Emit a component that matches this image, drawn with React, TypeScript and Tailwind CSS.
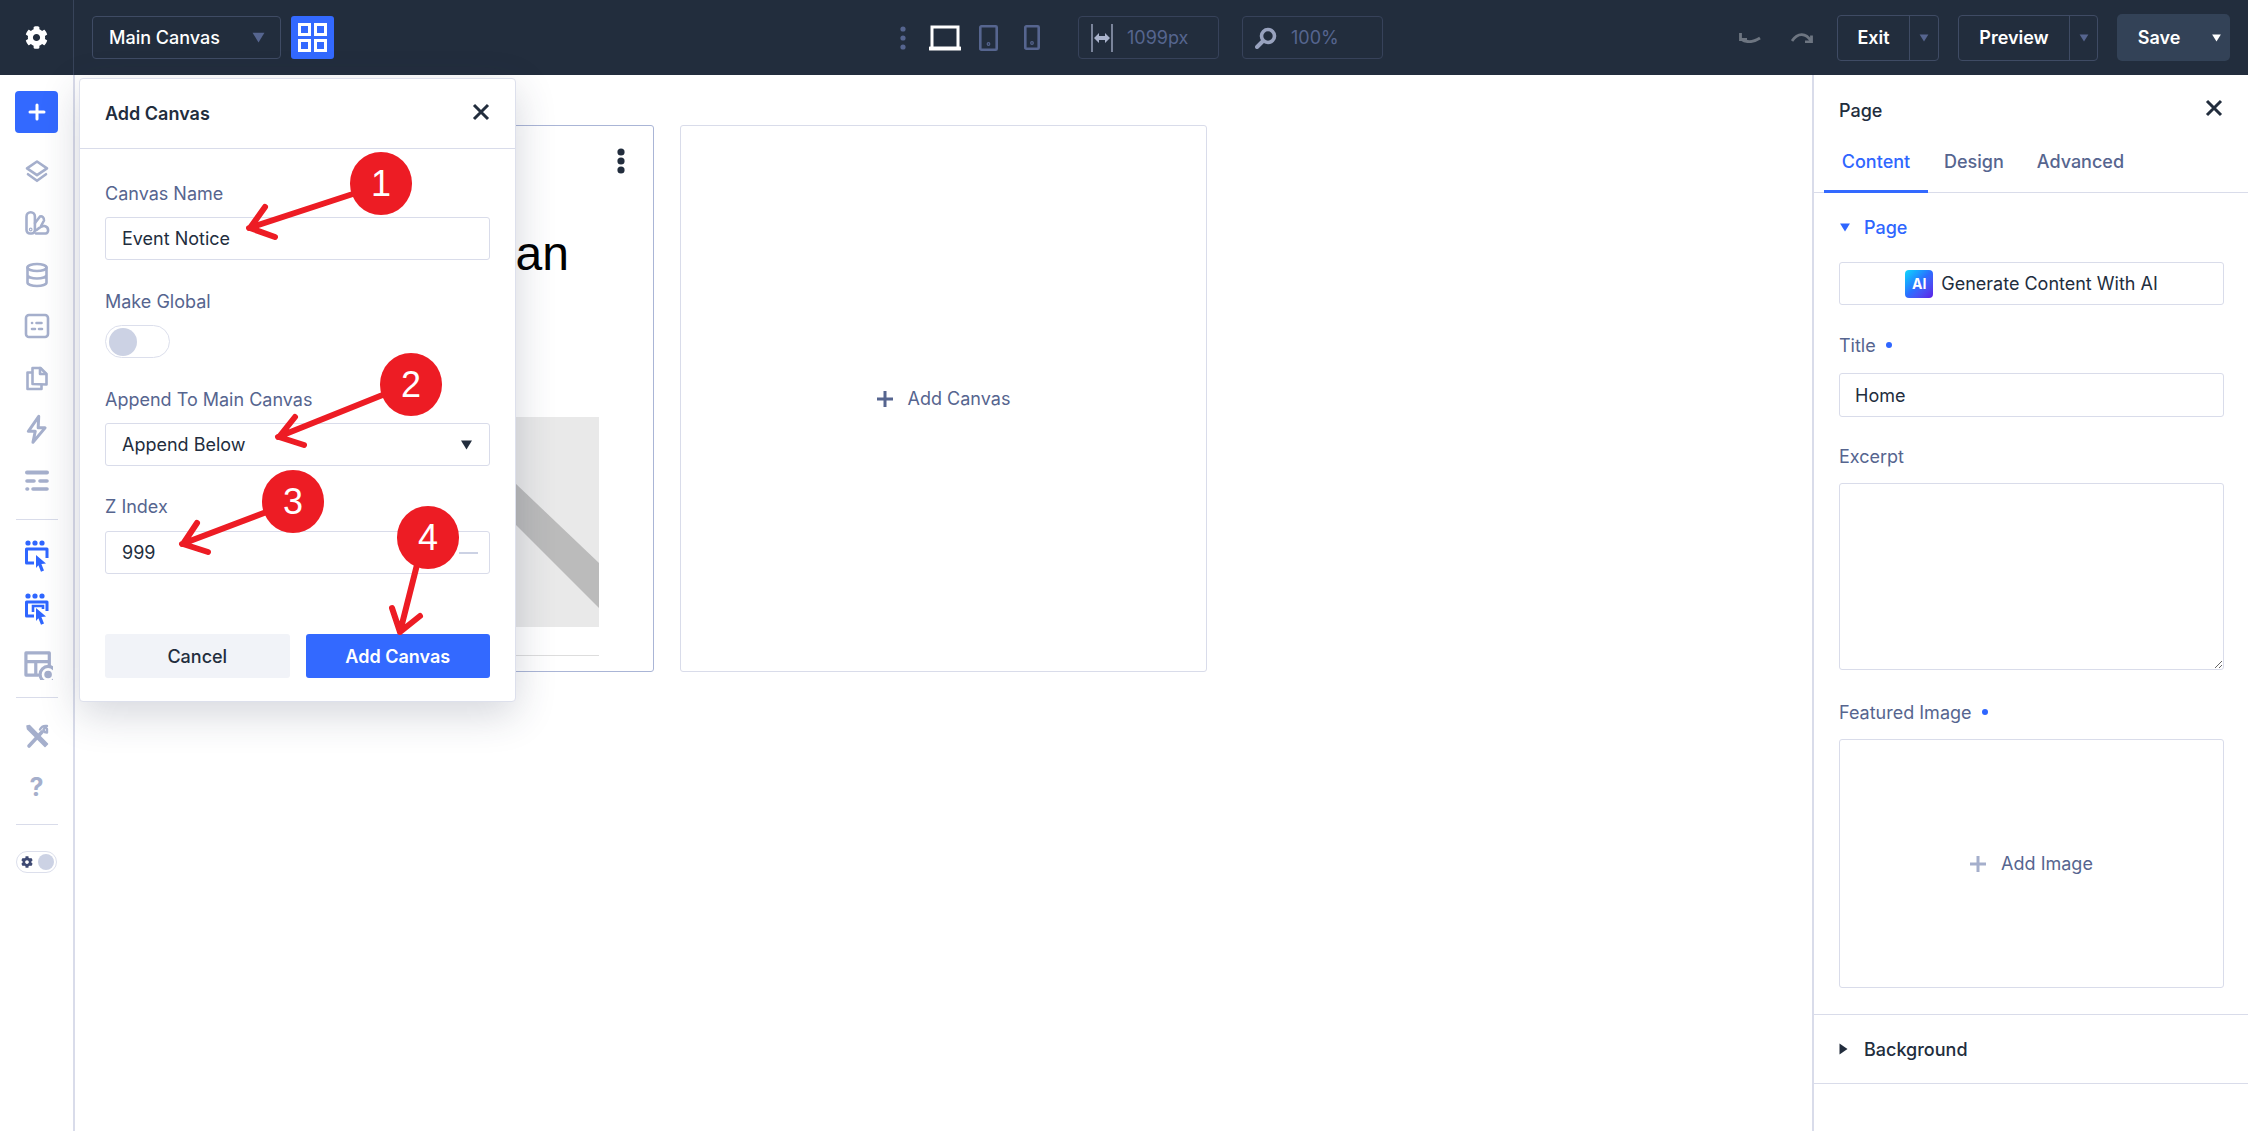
import { FaCog } from "react-icons/fa";
import type { ReactNode } from "react";

const sideStroke = "#a5afcc";

function Caret({ className }: { className: string }) {
  return (
    <svg viewBox="0 0 12 10" className={className} fill="currentColor">
      <path d="M0.5 0.5h11L6 9.5z" />
    </svg>
  );
}

function SideIcon({ children, size = 26, className = "h-[51.5px]" }: { children: ReactNode; size?: number; className?: string }) {
  return (
    <div className={`flex items-center justify-center w-full ${className}`}>
      <svg width={size} height={size} viewBox="0 0 26 26" fill="none" stroke={sideStroke} strokeWidth="2.6" strokeLinecap="round" strokeLinejoin="round">
        {children}
      </svg>
    </div>
  );
}

function SelectorIcon({ nested }: { nested?: boolean }) {
  return (
    <svg width="28" height="34" viewBox="0 0 28 34" fill="none">
      <g fill="#2f66ff">
        <circle cx="5" cy="3" r="2.6" />
        <circle cx="12" cy="3" r="2.6" />
        <circle cx="19" cy="3" r="2.6" />
      </g>
      <path d="M11 23H3.5V9h20.5v9" stroke="#2f66ff" strokeWidth="3" strokeLinejoin="round" />
      {nested && <path d="M10 19v-6h10v3" stroke="#2f66ff" strokeWidth="2.6" />}
      <path d="M13 15l10 8.5-4.6.6 2.6 6.4-3 1.2-2.6-6.4L13 28z" fill="#2f66ff" />
    </svg>
  );
}

function Sidebar() {
  return (
    <aside className="w-[75px] shrink-0 border-r-2 border-[#d9dcea] flex flex-col items-center pt-[16px] bg-white">
      <div className="w-[43px] h-[42px] rounded-[4px] bg-[#3369ff] flex items-center justify-center mb-[13px]">
        <svg width="18" height="18" viewBox="0 0 18 18" stroke="#fff" strokeWidth="3" strokeLinecap="round">
          <path d="M9 2v14M2 9h14" />
        </svg>
      </div>
      <SideIcon>
        <path d="M13 2.5l10 6.8-10 6.8-10-6.8z" />
        <path d="M4 15.2l9 6.6 9-6.6" />
      </SideIcon>
      <SideIcon>
        <path d="M2.5 6.5a4.2 4.2 0 0 1 8.4 0v14a3.5 3.5 0 0 1-3.5 3h-1.5a3.4 3.4 0 0 1-3.4-3.4z" />
        <path d="M11 13l5-6.5c2-1 4.4 1.5 4 4l-3 5.5M12 23.5h9.5c3.3 0 4-6.5-1-7.5-3-.6-5 1.5-8 4" />
        <circle cx="6.7" cy="19.5" r=".6" />
      </SideIcon>
      <SideIcon>
        <ellipse cx="13" cy="5.5" rx="9.5" ry="3.5" />
        <path d="M3.5 5.5v15c0 2 4.2 3.5 9.5 3.5s9.5-1.5 9.5-3.5v-15M3.5 13c0 2 4.2 3.5 9.5 3.5s9.5-1.500 9.500-3.500" />
      </SideIcon>
      <SideIcon>
        <rect x="2" y="2" width="22" height="22" rx="3" />
        <path d="M8 10h.1M12.500 10h5M8 16h3M15 16h3" />
      </SideIcon>
      <SideIcon>
        <path d="M8.500 19V3h8l6 6v10.500z" />
        <path d="M16 3v6h6M8 7.500H3.500V24h14v-4" />
      </SideIcon>
      <SideIcon size={30}>
        <path d="M14.500 2L5.500 15h6l-2 9.500 10.500-12.500h-6z" />
      </SideIcon>
      <SideIcon>
        <path d="M3 4.500h20" strokeWidth="4" />
        <path d="M3 13h7M16 13h7" strokeWidth="3.600" />
        <path d="M3 21h.6M9 21h14" strokeWidth="3.600" />
      </SideIcon>
      <div className="w-[42px] h-px bg-[#d9dcea] mt-[12.5px] mb-[11px]" />
      <div className="h-[52px] flex items-center justify-center">
        <SelectorIcon />
      </div>
      <div className="h-[53px] flex items-center justify-center">
        <SelectorIcon nested />
      </div>
      <SideIcon size={32} className="h-[55px]">
        <path d="M14 22H4V4h19v11M4 11h19M12 11v11" />
        <circle cx="22" cy="21.500" r="6.500" />
        <circle cx="22" cy="21.500" r="1.800" fill={sideStroke} />
      </SideIcon>
      <div className="w-[42px] h-px bg-[#d9dcea] mt-[6px] mb-[12px]" />
      <SideIcon className="h-[52px]">
        <path d="M5 23L18 9" strokeWidth="3.600" />
        <path d="M16 6.500c1.500-3 4-4 7-3.500l-3.500 3.500 1 2.500 2.500.500L23 6" strokeWidth="2.400" />
        <path d="M3 3l2.500-.5 18 18.500-2.500 2.500L3.500 6z" fill={sideStroke} strokeWidth="1.500" />
      </SideIcon>
      <div className="h-[52px] flex items-center justify-center text-[25px] font-bold text-[#a5afcc]">?</div>
      <div className="w-[42px] h-px bg-[#d9dcea] mt-[10px] mb-[26px]" />
      <div className="w-[41px] h-[22px] rounded-full border border-[#dcdfec] flex items-center justify-between pl-[4px] pr-[2px]">
        <FaCog className="text-[#3e4a73] text-[12px]" />
        <div className="w-[16px] h-[16px] rounded-full bg-[#ccd2e4]" />
      </div>
    </aside>
  );
}

function TopBar() {
  return (
    <header className="h-[75px] shrink-0 bg-[#222d3d] flex items-center">
      <div className="w-[74px] h-full border-r border-[#38445a] flex items-center justify-center">
        <FaCog className="text-white text-[23px]" />
      </div>
      <div className="ml-[18px] w-[189px] h-[43px] rounded-[4px] border border-[#3f4b64] flex items-center justify-between pl-[16px] pr-[15px] text-white text-[18px] font-medium">
        Main Canvas
        <Caret className="w-[13px] h-[11px] text-[#56658f]" />
      </div>
      <div className="ml-[10px] w-[43px] h-[43px] rounded-[3px] bg-[#3369ff] flex items-center justify-center">
        <svg width="29" height="29" viewBox="0 0 29 29" fill="none" stroke="#fff" strokeWidth="3">
          <rect x="1.500" y="1.500" width="10" height="10" />
          <rect x="17.500" y="1.500" width="10" height="10" />
          <rect x="1.500" y="17.500" width="10" height="10" />
          <rect x="17.500" y="17.500" width="10" height="10" />
        </svg>
      </div>

      <svg width="6" height="24" viewBox="0 0 6 24" fill="#56658f" className="ml-[566px]">
        <circle cx="3" cy="3" r="2.600" />
        <circle cx="3" cy="12" r="2.600" />
        <circle cx="3" cy="21" r="2.600" />
      </svg>
      <svg width="32" height="26" viewBox="0 0 32 26" fill="none" stroke="#fff" className="ml-[23px]">
        <path d="M3 23V2h26v21" strokeWidth="3" />
        <path d="M1 23.500h30" strokeWidth="4" strokeLinecap="round" />
      </svg>
      <svg width="19" height="26" viewBox="0 0 19 26" fill="none" stroke="#56658f" strokeWidth="2.600" className="ml-[18px]">
        <rect x="1.300" y="1.300" width="16.400" height="23.400" rx="1" />
        <circle cx="9.500" cy="19" r=".6" />
      </svg>
      <svg width="16" height="25" viewBox="0 0 16 25" fill="none" stroke="#56658f" strokeWidth="2.600" className="ml-[26px]">
        <rect x="1.300" y="1.300" width="13.400" height="22.400" rx="1" />
        <circle cx="8" cy="18" r=".6" />
      </svg>

      <div className="ml-[38px] w-[141px] h-[43px] rounded-[4px] border border-[#37425a] flex items-center pl-[12px] text-[#56658f] text-[18px]">
        <svg width="22" height="30" viewBox="0 0 22 30" fill="none">
          <path d="M1 1v28M21 1v28" stroke="#aab3cc" strokeWidth="1.300" />
          <path d="M3 15l5-5v3h6v-3l5 5-5 5v-3H8v3z" fill="#aab3cc" />
        </svg>
        <span className="ml-[14px]">1099px</span>
      </div>
      <div className="ml-[23px] w-[141px] h-[43px] rounded-[4px] border border-[#37425a] flex items-center pl-[12px] text-[#56658f] text-[18px]">
        <svg width="22" height="22" viewBox="0 0 22 22" fill="none" stroke="#98a2be">
          <circle cx="13" cy="9" r="6.500" strokeWidth="3.600" />
          <path d="M7.500 14.500L2 20" strokeWidth="4" strokeLinecap="round" />
        </svg>
        <span className="ml-[14px]">100%</span>
      </div>

      <div className="ml-auto mr-[18px] flex items-center">
        <svg width="22" height="11" viewBox="0 0 22 11" fill="none" stroke="#6d7581" strokeWidth="2.800">
          <path d="M1.500 1v6.500H8" />
          <path d="M2 7c5 3.500 12 3.500 19-1" />
        </svg>
        <svg width="22" height="11" viewBox="0 0 22 11" fill="none" stroke="#6d7581" strokeWidth="2.800" className="ml-[30px]">
          <path d="M20.500 3.500V10H14" />
          <path d="M20 9C15 1 7 0 1 9" />
        </svg>
        <div className="ml-[24px] w-[102px] h-[46px] rounded-[4px] border border-[#3f4b64] flex items-center">
          <div className="w-[71px] text-center text-white text-[18px] font-semibold">Exit</div>
          <div className="flex-1 h-full border-l border-[#3f4b64] flex items-center justify-center">
            <Caret className="w-[10px] h-[8px] text-[#56658f]" />
          </div>
        </div>
        <div className="ml-[19px] w-[140px] h-[46px] rounded-[4px] border border-[#3f4b64] flex items-center">
          <div className="w-[110px] text-center text-white text-[18px] font-semibold">Preview</div>
          <div className="flex-1 h-full border-l border-[#3f4b64] flex items-center justify-center">
            <Caret className="w-[10px] h-[8px] text-[#56658f]" />
          </div>
        </div>
        <div className="ml-[19px] w-[113px] h-[47px] rounded-[5px] bg-[#334257] flex items-center">
          <div className="w-[84px] text-center text-white text-[18px] font-semibold">Save</div>
          <Caret className="ml-[10px] w-[11px] h-[8px] text-white" />
        </div>
      </div>
    </header>
  );
}

function CanvasArea() {
  return (
    <main className="flex-1 min-w-0 pt-[50px] pl-[52px] flex gap-[26px] items-start bg-white">
      <div className="w-[527px] h-[547px] rounded-[3px] border border-[#aab5d6] px-[18px] relative flex flex-col items-end">
        <svg width="8" height="26" viewBox="0 0 8 26" fill="#222d3d" className="absolute top-[22px] right-[28px]">
          <circle cx="4" cy="4" r="3.600" />
          <circle cx="4" cy="13" r="3.600" />
          <circle cx="4" cy="22" r="3.600" />
        </svg>
        <div className="mt-[98px] mr-[66px] text-[48px] leading-[60px] text-black font-['Liberation_Sans',sans-serif]">an</div>
        <div className="mt-[133px] mr-[36px] w-[470px] h-[210px] bg-[#e9e9e9] overflow-hidden">
          <svg width="470" height="210" viewBox="0 0 470 210">
            <path d="M0 -120L470 214V150L120 -120z" fill="none" />
            <path d="M300 -6L470 146V191L300 26L280 60L300 -6z" fill="none" />
            <path d="M386 66L470 146V191L386 107z" fill="#bbbbbb" />
          </svg>
        </div>
        <div className="mt-[28px] mr-[36px] w-[470px] h-px bg-[#dddddd]" />
      </div>
      <div className="w-[527px] h-[547px] rounded-[3px] border border-[#d9dcea] flex items-center justify-center gap-[15px] text-[#56658f] text-[18px]">
        <svg width="16" height="16" viewBox="0 0 16 16" stroke="#56658f" strokeWidth="3">
          <path d="M8 0v16M0 8h16" />
        </svg>
        Add Canvas
      </div>
    </main>
  );
}

function FieldLabel({ text, dot }: { text: string; dot?: boolean }) {
  return (
    <div className="h-[24px] flex items-center text-[18px] text-[#56658f]">
      {text}
      {dot && <span className="ml-[10px] w-[6px] h-[6px] rounded-full bg-[#2f66ff]" />}
    </div>
  );
}

function RightPanel() {
  return (
    <aside className="w-[436px] shrink-0 border-l-2 border-[#d9dcea] bg-white flex flex-col">
      <div className="h-[65px] pl-[25px] pr-[24px] pt-[5px] flex items-center justify-between">
        <span className="text-[18px] font-medium text-[#222d3d]">Page</span>
        <svg width="18" height="18" viewBox="0 0 18 18" stroke="#222d3d" strokeWidth="3" className="mr-[1px] -mt-[5px]">
          <path d="M2 2l14 14M16 2L2 16" />
        </svg>
      </div>
      <div className="h-[53px] border-b border-[#d9dcea] pl-[10px] flex text-[18px] font-medium text-[#56658f]">
        <div className="w-[104px] h-[53px] border-b-[3px] border-[#3369ff] text-[#2f66ff] text-center pt-[8px]">Content</div>
        <div className="ml-[16px] pt-[8px]">Design</div>
        <div className="ml-[33px] pt-[8px]">Advanced</div>
      </div>
      <section className="pl-[25px] pr-[24px] pt-[22px] pb-[26px] border-b border-[#d9dcea]">
        <div className="h-[24px] flex items-center mb-[23px] text-[18px] font-medium text-[#2f66ff]">
          <Caret className="w-[12px] h-[9px] mr-[13px]" />
          Page
        </div>
        <div className="h-[43px] rounded-[3px] border border-[#d9dcea] flex items-center justify-center gap-[8px] text-[18px] text-[#222d3d]">
          <span className="w-[28px] h-[28px] rounded-[4px] bg-linear-to-br from-[#17d7fb] via-[#2b6cff] to-[#5a18e6] flex items-center justify-center text-white text-[14px] font-bold">AI</span>
          Generate Content With AI
        </div>
        <div className="mt-[28px] mb-[16px]">
          <FieldLabel text="Title" dot />
        </div>
        <input readOnly value="Home" className="w-full h-[44px] rounded-[3px] border border-[#d9dcea] px-[15px] text-[18px] text-[#222d3d] outline-none" />
        <div className="mt-[27px] mb-[15px]">
          <FieldLabel text="Excerpt" />
        </div>
        <textarea readOnly className="block w-full h-[187px] rounded-[3px] border border-[#d9dcea] outline-none resize-y" />
        <div className="mt-[30px] mb-[15px]">
          <FieldLabel text="Featured Image" dot />
        </div>
        <div className="h-[249px] rounded-[3px] border border-[#d9dcea] flex items-center justify-center gap-[15px] text-[18px] text-[#56658f]">
          <svg width="16" height="16" viewBox="0 0 16 16" stroke="#a5afcc" strokeWidth="3">
            <path d="M8 0v16M0 8h16" />
          </svg>
          Add Image
        </div>
      </section>
      <div className="h-[69px] pl-[25px] border-b border-[#d9dcea] flex items-center text-[18px] font-medium text-[#222d3d]">
        <svg width="9" height="12" viewBox="0 0 9 12" fill="currentColor" className="mr-[16px]">
          <path d="M0.500 0.500v11L8.500 6z" />
        </svg>
        Background
      </div>
    </aside>
  );
}

function AddCanvasModal() {
  const input = "w-full h-[43px] rounded-[3px] border border-[#d9dcea] px-[16px] text-[18px] text-[#222d3d] outline-none flex items-center";
  return (
    <div className="absolute left-[79px] top-[78px] w-[437px] h-[624px] rounded-[4px] border border-[#dde0ec] bg-white shadow-[0_12px_40px_rgba(40,50,80,0.2)] flex flex-col">
      <div className="h-[70px] border-b border-[#d9dcea] pl-[25px] pr-[25px] flex items-center justify-between">
        <span className="text-[18px] font-semibold text-[#222d3d]">Add Canvas</span>
        <svg width="18" height="18" viewBox="0 0 18 18" stroke="#222d3d" strokeWidth="3" className="-mt-[4px]">
          <path d="M2 2l14 14M16 2L2 16" />
        </svg>
      </div>
      <div className="px-[25px] pt-[32px]">
        <FieldLabel text="Canvas Name" />
        <input readOnly value="Event Notice" className={`${input} mt-[12px]`} />
        <div className="mt-[29px]">
          <FieldLabel text="Make Global" />
        </div>
        <div className="mt-[12px] w-[65px] h-[33px] rounded-full border border-[#dcdfec] flex items-center pl-[3px]">
          <div className="w-[28px] h-[28px] rounded-full bg-[#ccd2e4]" />
        </div>
        <div className="mt-[29px]">
          <FieldLabel text="Append To Main Canvas" />
        </div>
        <div className={`${input} mt-[12px] justify-between`}>
          Append Below
          <Caret className="w-[13px] h-[10px] mr-[0px] text-[#222d3d]" />
        </div>
        <div className="mt-[28px]">
          <FieldLabel text="Z Index" />
        </div>
        <div className={`${input} mt-[13px] justify-between`}>
          999
          <div className="w-[19px] h-[2px] bg-[#ccd2e4] -mr-[5px]" />
        </div>
        <div className="mt-[60px] flex gap-[16px]">
          <div className="flex-1 h-[44px] rounded-[3px] bg-[#f1f3f8] flex items-center justify-center text-[18px] font-medium text-[#222d3d]">Cancel</div>
          <div className="flex-1 h-[44px] rounded-[3px] bg-[#3369ff] flex items-center justify-center text-[18px] font-semibold text-white">Add Canvas</div>
        </div>
      </div>
    </div>
  );
}

function Annotations() {
  return (
    <>
      <svg className="absolute left-0 top-0 pointer-events-none" width="700" height="700" viewBox="0 0 700 700" fill="none" stroke="#ed1c24" strokeWidth="6" strokeLinecap="round" strokeLinejoin="round">
        <path d="M365 190L249 228M265 207L250 228L275 237" />
        <path d="M395 390L278 437M295 417L279 437L304 445" />
        <path d="M277 508L182 544M197 523L183 544L208 552" />
        <path d="M422 545L400 632M392 608L400 632L420 616" />
      </svg>
      <Badge n="1" className="left-[350px] top-[152px]" />
      <Badge n="2" className="left-[380px] top-[353px]" />
      <Badge n="3" className="left-[262px] top-[470px]" />
      <Badge n="4" className="left-[397px] top-[506px]" />
    </>
  );
}

function Badge({ n, className }: { n: string; className: string }) {
  return (
    <div className={`absolute w-[62px] h-[63px] rounded-full bg-[#ed1c24] flex items-center justify-center text-white text-[36px] font-['Liberation_Sans',sans-serif] ${className}`}>
      {n}
    </div>
  );
}

export default function App() {
  return (
    <div className="relative w-[2248px] h-[1131px] overflow-hidden bg-white flex flex-col font-['Inter',sans-serif]">
      <TopBar />
      <div className="flex-1 min-h-0 flex">
        <Sidebar />
        <CanvasArea />
        <RightPanel />
      </div>
      <AddCanvasModal />
      <Annotations />
    </div>
  );
}
